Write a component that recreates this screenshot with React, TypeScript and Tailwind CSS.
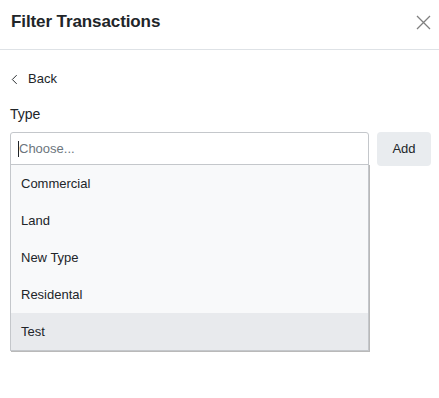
import { useState } from 'react'

const types = ['Commercial', 'Land', 'New Type', 'Residental', 'Test']

export default function App() {
  const [hovered, setHovered] = useState('Test')

  return (
    <div className="w-[439px] h-[398px] bg-white text-[#212529] font-['Liberation_Sans',Arial,sans-serif]">
      <div className="h-[50px] border-b border-[#dee2e6] flex items-start justify-between pl-[11px] pr-[8px] pt-[12px]">
        <h1 className="text-[17px] leading-[20px] font-bold tracking-[-0.1px]">Filter Transactions</h1>
        <button className="w-[16px] h-[16px] mt-[2px] text-[#808080]">
          <svg viewBox="0 0 16 16" width="16" height="16" fill="none" stroke="currentColor" strokeWidth="1.3">
            <path d="M2 2L15 15M15 2L2 15" />
          </svg>
        </button>
      </div>

      <div className="pl-[10px] pr-[8px]">
        <button className="mt-[21px] flex items-center gap-[10px] h-[16px] text-[13px]">
          <svg viewBox="0 0 8 12" width="7" height="11" fill="none" stroke="#212529" strokeWidth="1.1" className="ml-[1px]">
            <path d="M6.5 1L1.5 6L6.5 11" />
          </svg>
          <span>Back</span>
        </button>

        <div className="mt-[19px] text-[14px] leading-[16px] font-medium">Type</div>

        <div className="mt-[10px] flex gap-[8px]">
          <div className="relative flex-1">
            <div className="h-[33px] border border-[#c4c7cb] rounded-t-[3px] flex items-center pl-[7px] text-[13px]">
              <span className="w-px h-[16px] bg-[#212529]" />
              <span className="text-[#6c757d]">Choose...</span>
            </div>
            <ul className="absolute left-0 right-0 top-[32px] border border-[#c4c7cb] shadow-[1px_1px_0_#b9b9b9] bg-[#f8f9fa]">
              {types.map((t) => (
                <li
                  key={t}
                  onMouseEnter={() => setHovered(t)}
                  className={
                    'h-[37px] flex items-center pl-[10px] text-[13px] ' +
                    (hovered === t ? 'bg-[#e8eaed]' : 'bg-[#f8f9fa]')
                  }
                >
                  {t}
                </li>
              ))}
            </ul>
          </div>
          <button className="w-[54px] h-[34px] rounded-[4px] bg-[#e9ecef] text-[13px] text-[#212529]">Add</button>
        </div>
      </div>
    </div>
  )
}
